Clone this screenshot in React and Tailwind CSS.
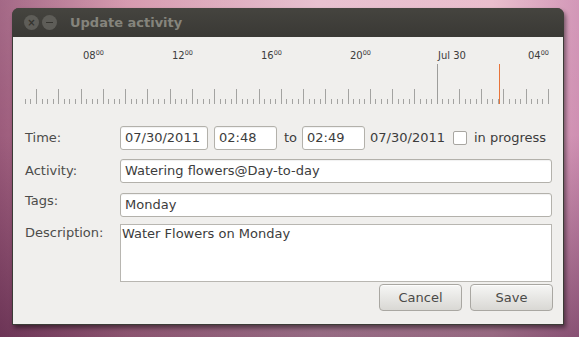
const MID = 436.7 - 13;
const HOUR = 22.26;

function Ruler() {
  const ticks = [];
  for (let q = -74; q <= 20; q++) {
    const x = Math.round(MID + (q * HOUR) / 4) + 0.5;
    const major = q % 4 === 0;
    if (q === 0) continue;
    ticks.push(
      <line key={q} x1={x} x2={x} y1={major ? 52 : 62} y2={67} stroke="#a3a3a1" strokeWidth="1" />
    );
  }
  const labels = [
    { h: -16, t: "08" },
    { h: -12, t: "12" },
    { h: -8, t: "16" },
    { h: -4, t: "20" },
    { h: 4, t: "04" },
  ];
  return (
    <div className="relative h-[72px] w-full">
      <svg width="550" height="72" className="absolute left-0 top-0">
        {ticks}
        <line x1={Math.round(MID) + 0.5} x2={Math.round(MID) + 0.5} y1="27" y2="67" stroke="#9d9d9b" />
        <line x1="486.5" x2="486.5" y1="27" y2="67" stroke="#e8743a" />
      </svg>
      {labels.map((l) => (
        <span
          key={l.t}
          className="absolute top-[13px] text-[10px] leading-[12px] text-[#3c3c3c]"
          style={{ left: Math.round(MID + l.h * HOUR) + 2 }}
        >
          {l.t}
          <sup className="text-[6.5px] relative -top-[1px] align-top leading-[8px]">00</sup>
        </span>
      ))}
      <span className="absolute top-[13px] left-[425px] text-[10px] leading-[12px] text-[#3c3c3c]">Jul 30</span>
    </div>
  );
}

function Box({ className, children }) {
  return (
    <div
      className={
        "h-[24px] bg-white border border-[#b3b1ab] rounded-[3px] pl-[4px] flex items-center text-[13px] text-[#3c3c3c] shadow-[inset_0_1px_1px_rgba(0,0,0,0.06)] " +
        className
      }
    >
      {children}
    </div>
  );
}

function Button({ children }) {
  return (
    <button className="w-[83px] h-[27px] rounded-[4px] border border-[#a9a7a2] bg-gradient-to-b from-[#f6f6f5] to-[#d9d8d4] text-[13px] text-[#4a4a48] shadow-[inset_0_1px_0_rgba(255,255,255,0.8)]">
      {children}
    </button>
  );
}

export default function App() {
  return (
    <div className="w-[579px] h-[337px] overflow-hidden font-['DejaVu_Sans',sans-serif] bg-[linear-gradient(180deg,rgba(255,255,255,0.08)_0%,rgba(0,0,0,0)_40%,rgba(50,5,40,0.45)_100%),linear-gradient(90deg,#9c5c7c_0%,#d393a9_22%,#e6bccc_55%,#e8b9c9_85%,#cf8fb2_100%)] pt-[8px] pl-[12px]">
      <div className="w-[552px] h-[317px] bg-[#3c3b37] rounded-t-[7px] shadow-[2px_3px_4px_rgba(0,0,0,0.45)] flex flex-col">
        <div className="h-[29px] flex items-center pl-[12px] bg-gradient-to-b from-[#45443f] to-[#3a3935] rounded-t-[7px]">
          <div className="w-[15px] h-[15px] rounded-full bg-[#5e5d58] flex items-center justify-center text-[#34332e] text-[10px] leading-none font-bold">
            ×
          </div>
          <div className="w-[15px] h-[15px] rounded-full bg-[#5e5d58] ml-[3px] flex items-center justify-center">
            <div className="w-[7px] h-[1.5px] bg-[#35342f]" />
          </div>
          <span className="ml-[13px] text-[13px] font-bold text-[#85847c] leading-none">Update activity</span>
        </div>
        <div className="mx-[1px] mb-[1px] flex-1 bg-[#f0efed] flex flex-col">
          <Ruler />
          <div className="pl-[12px] pr-[11px] mt-[17px] flex flex-col text-[13px] text-[#4c4c4a]">
            <div className="flex items-center h-[24px]">
              <span className="w-[95px] shrink-0">Time:</span>
              <Box className="w-[88px]">07/30/2011</Box>
              <Box className="w-[63px] ml-[6px]">02:48</Box>
              <span className="ml-[7px] text-[#3c3c3c]">to</span>
              <Box className="w-[63px] ml-[5px]">02:49</Box>
              <span className="ml-[5px] text-[#3c3c3c]">07/30/2011</span>
              <div className="ml-[8px] w-[14px] h-[14px] bg-white border border-[#a8a6a1] rounded-[2px]" />
              <span className="ml-[7px] text-[#3c3c3c]">in progress</span>
            </div>
            <div className="flex items-center mt-[9px]">
              <span className="w-[95px] shrink-0">Activity:</span>
              <Box className="flex-1">Watering flowers@Day-to-day</Box>
            </div>
            <div className="flex items-start mt-[10px]">
              <span className="w-[95px] shrink-0 leading-[16px]">Tags:</span>
              <Box className="flex-1">Monday</Box>
            </div>
            <div className="flex items-start mt-[7px]">
              <span className="w-[95px] shrink-0 leading-[18px]">Description:</span>
              <div className="flex-1 h-[58px] bg-white border border-[#b8b6b1] pl-[1px] text-[#3c3c3c] leading-[18px]">
                Water Flowers on Monday
              </div>
            </div>
            <div className="flex justify-end gap-[8px] mt-[2px] mr-[-1px]">
              <Button>Cancel</Button>
              <Button>Save</Button>
            </div>
          </div>
        </div>
      </div>
    </div>
  );
}
